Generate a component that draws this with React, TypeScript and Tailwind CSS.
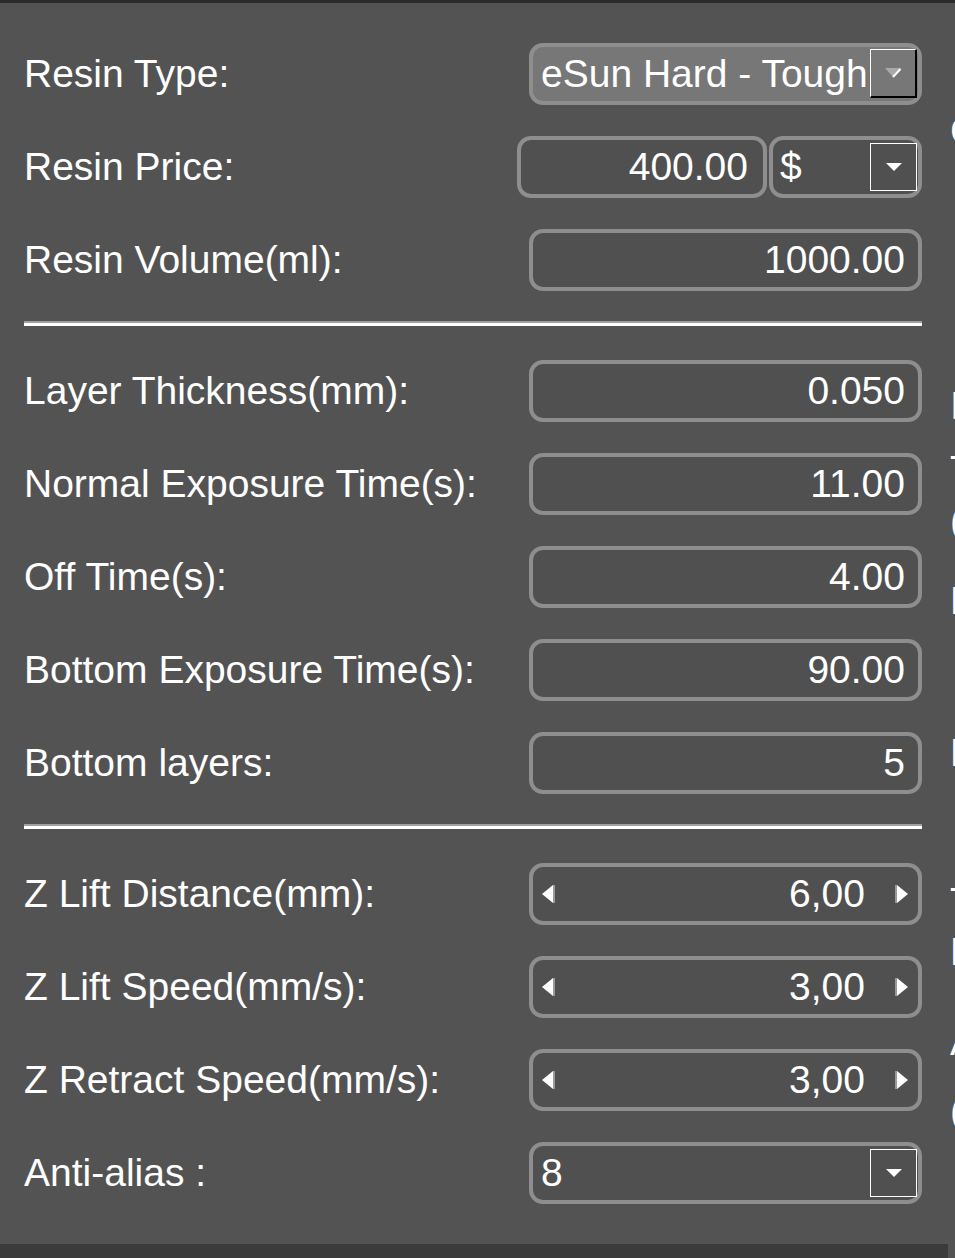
import type { ReactNode } from 'react';

const field = 'h-[62px] border-4 border-[#8e8e8e] rounded-[14px] bg-[#505050] flex items-center';

function Row({ label, children }: { label: string; children: ReactNode }) {
  return (
    <div className="h-[93px] flex items-center justify-between">
      <span className="leading-none whitespace-nowrap">{label}</span>
      {children}
    </div>
  );
}

function NumberBox({ value }: { value: string }) {
  return (
    <div className={`${field} w-[393px] justify-end pr-[13px]`}>
      <span className="leading-none">{value}</span>
    </div>
  );
}

function LeftArrow() {
  return (
    <svg width="16" height="22" viewBox="0 0 16 22" className="shrink-0">
      <polygon points="2,11 13,2 13,20" fill="#ffffff" />
      <polygon points="13,2 15,2 15,20 13,20" fill="#9a9a9a" />
    </svg>
  );
}

function RightArrow() {
  return (
    <svg width="16" height="22" viewBox="0 0 16 22" className="shrink-0">
      <polygon points="1,2 3,2 3,20 1,20" fill="#9a9a9a" />
      <polygon points="3,2 14,11 3,20" fill="#ffffff" />
    </svg>
  );
}

function Spinner({ value }: { value: string }) {
  return (
    <div className={`${field} w-[393px] pl-[7px] pr-[8px]`}>
      <LeftArrow />
      <span className="ml-auto leading-none mr-[29px]">{value}</span>
      <RightArrow />
    </div>
  );
}

function DropButton() {
  return (
    <div className="w-[47px] h-[48px] border border-white flex items-center justify-center mr-[1px]">
      <svg width="18" height="10" viewBox="0 0 18 10">
        <polygon points="1,1 17,1 9,9" fill="#ffffff" />
      </svg>
    </div>
  );
}

function Divider() {
  return <div className="mt-[15px] mb-[18px] h-[5px] bg-white border-t-2 border-[#a0a0a0]" />;
}

export default function App() {
  const fragments = [
    { top: 108, ch: 'C' },
    { top: 383, ch: 'I' },
    { top: 447, ch: 'T' },
    { top: 498, ch: '(' },
    { top: 578, ch: 'E' },
    { top: 730, ch: 'E' },
    { top: 879, ch: 'T' },
    { top: 929, ch: 'N' },
    { top: 1019, ch: 'A' },
    { top: 1088, ch: '(' },
  ];

  return (
    <div className="w-[955px] h-[1258px] bg-[#535353] flex flex-col overflow-hidden text-white text-[39px] font-['Liberation_Sans',Arial,sans-serif]">
      <div className="h-[3px] bg-[#2b2b2b] shrink-0" />
      <div className="flex flex-1">
        <div className="w-[948px] flex flex-col">
          <div className="pl-[24px] pr-[26px] pt-[24px] flex flex-col">
            <Row label="Resin Type:">
              <div className="w-[393px] h-[62px] border-4 border-[#8e8e8e] rounded-[14px] bg-[#777777] flex items-center pl-[8px]">
                <span className="leading-none whitespace-nowrap">eSun Hard - Tough</span>
                <div className="ml-auto mr-[1px] w-[47px] h-[49px] border-t border-l border-white border-r-2 border-b-2 border-r-black border-b-black flex items-center justify-center">
                  <svg width="18" height="12" viewBox="0 0 18 12">
                    <polygon points="1,1 17,1 9,10" fill="#a9a9a9" />
                    <line x1="9" y1="10" x2="16.5" y2="2" stroke="#ffffff" strokeWidth="2" />
                  </svg>
                </div>
              </div>
            </Row>
            <Row label="Resin Price:">
              <div className="flex gap-[2px]">
                <div className={`${field} w-[250px] justify-end pr-[15px]`}>
                  <span className="leading-none">400.00</span>
                </div>
                <div className={`${field} w-[153px] pl-[7px]`}>
                  <span className="leading-none">$</span>
                  <div className="ml-auto">
                    <DropButton />
                  </div>
                </div>
              </div>
            </Row>
            <Row label="Resin Volume(ml):">
              <NumberBox value="1000.00" />
            </Row>
            <Divider />
            <Row label="Layer Thickness(mm):">
              <NumberBox value="0.050" />
            </Row>
            <Row label="Normal Exposure Time(s):">
              <NumberBox value="11.00" />
            </Row>
            <Row label="Off Time(s):">
              <NumberBox value="4.00" />
            </Row>
            <Row label="Bottom Exposure Time(s):">
              <NumberBox value="90.00" />
            </Row>
            <Row label="Bottom layers:">
              <NumberBox value="5" />
            </Row>
            <Divider />
            <Row label="Z Lift Distance(mm):">
              <Spinner value="6,00" />
            </Row>
            <Row label="Z Lift Speed(mm/s):">
              <Spinner value="3,00" />
            </Row>
            <Row label="Z Retract Speed(mm/s):">
              <Spinner value="3,00" />
            </Row>
            <Row label="Anti-alias :">
              <div className={`${field} w-[393px] pl-[8px]`}>
                <span className="leading-none">8</span>
                <div className="ml-auto">
                  <DropButton />
                </div>
              </div>
            </Row>
          </div>
          <div className="mt-auto h-[14px] bg-[#3b3b3b]" />
        </div>
        <div className="w-[7px] relative overflow-hidden">
          {fragments.map((f) => (
            <span key={f.top} className="absolute left-[2px] leading-none" style={{ top: f.top }}>
              {f.ch}
            </span>
          ))}
        </div>
      </div>
    </div>
  );
}
